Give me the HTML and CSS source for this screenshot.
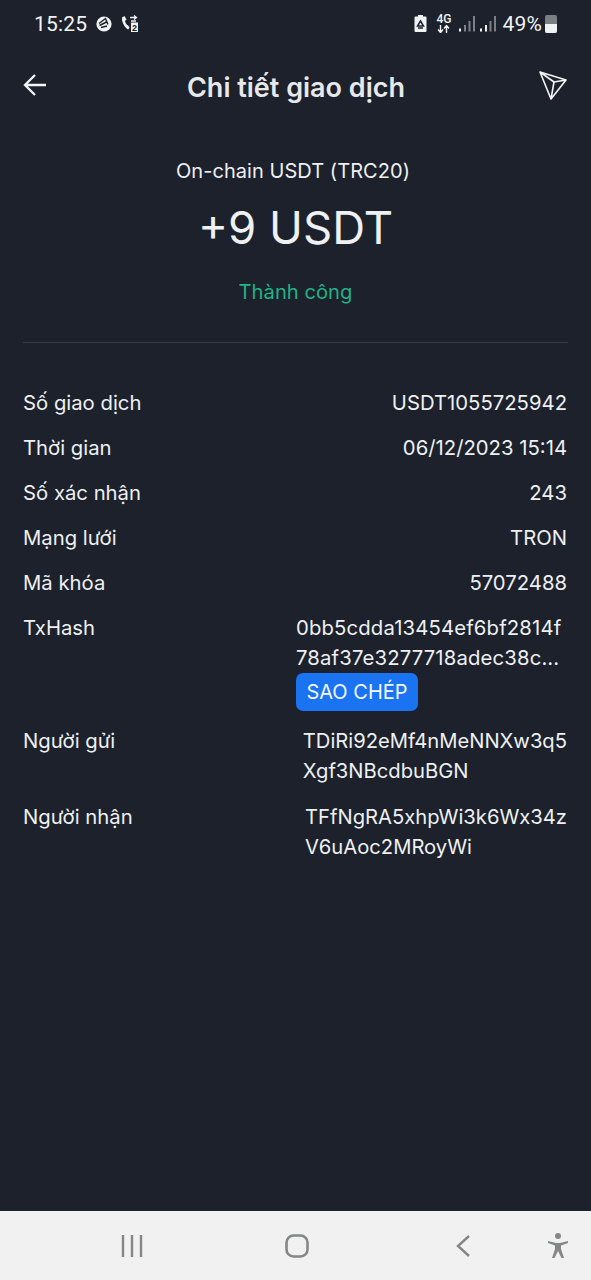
FILE: index.html
```html
<!DOCTYPE html>
<html lang="vi">
<head>
<meta charset="utf-8">
<title>Chi tiết giao dịch</title>
<link rel="stylesheet" href="styles.css">
</head>
<body>
<div class="screen">
  <div class="statusbar">
    <div class="st-left">
      <span class="clock">15:25</span>
      <svg class="ic-a" width="16" height="16" viewBox="0 0 16 16"><circle cx="8" cy="8" r="7.6" fill="#f1f2f3"/><path d="M3 7.500 9.500 2.500 12 8.500 M3.500 9.500 10.500 6 M5 11.500 11 10" stroke="#1c212c" stroke-width="1.400" fill="none"/></svg>
      <svg class="ic-b" width="19" height="19" viewBox="0 0 19 19"><path d="M1 3.500 3.500 2 5.500 5.500 4 7C4.500 9 5.500 10.500 7 11.500L8.500 13 7.500 15.500C4 14.500 .5 8 1 3.500Z" fill="#f1f2f3"/><path d="M9 3.500H15M13 1.500 15.500 3.500 13 5.500M15 7H10" stroke="#f1f2f3" stroke-width="1.300" fill="none"/><path d="M10 8.500H17V18H10Z" fill="#f1f2f3"/><text x="13.500" y="16.600" class="sim">2</text></svg>
    </div>
    <div class="st-right">
      <svg width="13" height="17" viewBox="0 0 13 17"><path d="M4 0H9V1.500H11.500A1 1 0 0 1 12.500 2.500V16A1 1 0 0 1 11.500 17H1.500A1 1 0 0 1 .5 16V2.500A1 1 0 0 1 1.500 1.500H4Z" fill="#f1f2f3"/><path d="M6.500 6 9.500 11H3.500Z M4 13H9" fill="none" stroke="#1c212c" stroke-width="1.500"/></svg>
      <span class="net"><span class="net-g">4G</span><svg width="13" height="8" viewBox="0 0 13 8"><path d="M3.500 0V7M1 4.500 3.500 7.500 6 4.500M9.500 8V1M7 3.500 9.500 .5 12 3.500" stroke="#f1f2f3" stroke-width="1.400" fill="none"/></svg></span>
      <svg class="sig" width="17" height="17" viewBox="0 0 17 17"><path d="M1 13.500h2v3H1z" fill="#f1f2f3"/><path d="M6 10h2v6.500H6zM10.500 6h2v10.500h-2zM15 1h2v15.500h-2z" fill="#7b7f86"/></svg>
      <svg class="sig" width="17" height="17" viewBox="0 0 17 17"><path d="M1 13.500h2v3H1zM6 10h2v6.500H6z" fill="#f1f2f3"/><path d="M10.500 6h2v10.500h-2zM15 1h2v15.500h-2z" fill="#7b7f86"/></svg>
      <span class="pct">49%</span>
      <span class="batt"><span class="batt-fill"></span></span>
    </div>
  </div>

  <header class="topbar">
    <svg class="back" width="24" height="24" viewBox="0 0 24 24"><path d="M12 2 2 12l10 10M2 12h21" stroke="#f4f5f6" stroke-width="2.300" fill="none"/></svg>
    <h1 class="title">Chi tiết giao dịch</h1>
    <svg class="tron" width="28" height="30" viewBox="0 0 28 30"><path d="M1 2 27 10 12 29Z M1 2 15 12 27 10 M15 12 12 29" stroke="#f4f5f6" stroke-width="1.600" fill="none" stroke-linejoin="round"/></svg>
  </header>

  <section class="summary">
    <div class="coin">On-chain USDT (TRC20)</div>
    <div class="amount">+9 USDT</div>
    <div class="state">Thành công</div>
  </section>

  <section class="details">
    <div class="row"><span class="k">Số giao dịch</span><span class="v">USDT1055725942</span></div>
    <div class="row"><span class="k">Thời gian</span><span class="v">06/12/2023 15:14</span></div>
    <div class="row"><span class="k">Số xác nhận</span><span class="v">243</span></div>
    <div class="row"><span class="k">Mạng lưới</span><span class="v">TRON</span></div>
    <div class="row"><span class="k">Mã khóa</span><span class="v">57072488</span></div>
    <div class="row row-hash">
      <span class="k">TxHash</span>
      <div class="hash">
        <div class="hash-text">0bb5cdda13454ef6bf2814f<br>78af37e3277718adec38c...</div>
        <button class="copy">SAO CHÉP</button>
      </div>
    </div>
    <div class="row row-multi"><span class="k">Người gửi</span><span class="addr">TDiRi92eMf4nMeNNXw3q5<br>Xgf3NBcdbuBGN</span></div>
    <div class="row row-multi"><span class="k">Người nhận</span><span class="addr">TFfNgRA5xhpWi3k6Wx34z<br>V6uAoc2MRoyWi</span></div>
  </section>

  <nav class="navbar">
    <svg class="nv-recents" width="22" height="22" viewBox="0 0 22 22"><path d="M2 0v22M11 0v22M20 0v22" stroke="#858687" stroke-width="2.400"/></svg>
    <svg class="nv-home" width="24" height="24" viewBox="0 0 24 24"><rect x="1.500" y="1.500" width="21" height="21" rx="7" stroke="#858687" stroke-width="2.600" fill="none"/></svg>
    <svg class="nv-back" width="14" height="22" viewBox="0 0 14 22"><path d="M13 1 2 11l11 10" stroke="#858687" stroke-width="2.400" fill="none"/></svg>
    <svg class="nv-a11y" width="22" height="26" viewBox="0 0 22 26"><circle cx="11" cy="3" r="3" fill="#858687"/><path d="M1 8 9 10H13L21 8V10L14 12.500V16L17 25H14.500L11 18 7.500 25H5L8 16V12.500L1 10Z" fill="#858687"/></svg>
  </nav>
</div>
</body>
</html>
```
FILE: styles.css
```css
* { box-sizing: border-box; }
html, body { margin: 0; padding: 0; }
body { width: 591px; height: 1280px; overflow: hidden; background: #1c212c; font-family: Inter, "Liberation Sans", sans-serif; color: #eef0f2; }
.screen { width: 591px; height: 1280px; display: flex; flex-direction: column; background: #1c212c; }

.statusbar { height: 46px; display: flex; justify-content: space-between; align-items: center; padding: 1px 34px 0 34px; color: #f1f2f3; }
.st-left, .st-right { display: flex; align-items: center; }
.clock { font-family: Roboto, sans-serif; font-size: 21px; margin-right: 9px; letter-spacing: .2px; }
.ic-a { margin-right: 9px; }
.st-right svg { margin-right: 9px; }
.st-right .sig { margin-right: 4px; }
.net { display: flex; flex-direction: column; align-items: center; margin-right: 7px; line-height: 1; }
.net svg { margin: 0; }
.net-g { font-family: Roboto, sans-serif; font-size: 12px; font-weight: 500; line-height: 11px; }
.pct { font-family: Roboto, sans-serif; font-size: 21px; margin-left: 2px; margin-right: 3px; letter-spacing: .2px; }
.batt { width: 12px; height: 18px; background: #7a7e85; border-radius: 2px; display: flex; align-items: flex-end; overflow: hidden; }
.batt-fill { display: block; width: 100%; height: 9px; background: #f1f2f3; }
.sim { font-family: "Liberation Sans", sans-serif; font-size: 9px; font-weight: 700; text-anchor: middle; fill: #1c212c; }

.topbar { height: 82px; display: flex; align-items: center; justify-content: space-between; padding: 0 24px 0 23px; }
.title { margin: 0 0 0 6px; font-size: 27px; font-weight: 600; color: #e6e8ea; }
.back, .tron { flex: none; margin-top: -4px; }

.summary { margin: 0 23px; height: 215px; border-bottom: 1px solid #363b46; display: flex; flex-direction: column; align-items: center; }
.coin { font-size: 20px; line-height: 24px; margin: 31px 5px 0 0; letter-spacing: .05px; }
.amount { font-size: 45.500px; line-height: 56px; margin-top: 17px; }
.state { font-size: 20.200px; line-height: 24px; margin-top: 24px; color: #21b286; }

.details { padding: 45px 24px 0 23px; display: flex; flex-direction: column; font-size: 20.300px; flex: 1; }
.row { display: flex; justify-content: space-between; min-height: 45px; line-height: 30px; }
.row-hash { min-height: 113px; }
.row-multi { min-height: 76px; }
.hash { width: 271px; }
.hash-text { line-height: 30px; letter-spacing: .15px; white-space: nowrap; }
.copy { display: block; width: 122px; height: 38px; background: #1a73f0; color: #f2f6ff; border: 0; border-radius: 7px; font: 400 20px Inter, sans-serif; padding: 0; }
.addr { text-align: left; font-size: 20.200px; }

.navbar { height: 69px; flex: none; background: #f1f1f2; display: flex; align-items: center; }
.nv-recents { margin-left: 121px; }
.nv-home { margin-left: 142px; }
.nv-back { margin-left: 147px; }
.nv-a11y { margin-left: 77px; }
```
